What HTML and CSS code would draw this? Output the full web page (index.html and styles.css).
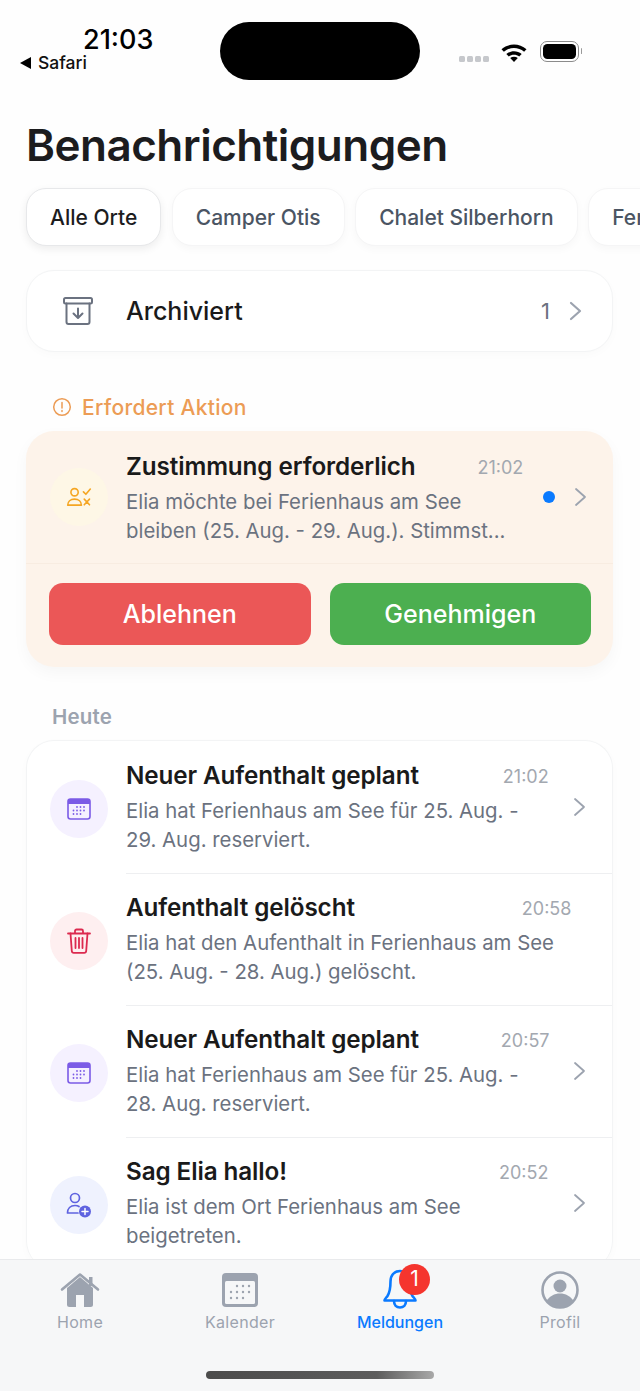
FILE: index.html
```html
<!DOCTYPE html>
<html lang="en">
<head>
    <meta charset="UTF-8">
    <meta name="viewport" content="width=device-width, initial-scale=1.0">
    <title>Benachrichtigungen</title>
    <link rel="stylesheet" href="styles.css">
</head>
<body>
    <div class="phone">
        <div class="status-bar">
            <div class="status-left">
                <div class="clock">21:03</div>
                <div class="back-app"><span class="back-arrow"></span>Safari</div>
            </div>
            <div class="island"></div>
            <div class="status-right">
                <div class="signal"><span></span><span></span><span></span><span></span></div>
                <svg class="wifi" width="28" height="20" viewBox="0 0 28 20">
                    <path d="M1.5 7.2C8.6.9 19.4.9 26.5 7.2l-2.4 2.6C18.300 4.800 9.700 4.800 3.900 9.800z" fill="#000"/>
                    <path d="M6.300 12C10.800 8.200 17.200 8.200 21.700 12l-2.500 2.600c-3-2.500-7.400-2.500-10.400 0z" fill="#000"/>
                    <path d="M10.200 16c2.200-1.700 5.400-1.700 7.600 0L14 20z" fill="#000"/>
                </svg>
                <div class="battery"><div class="battery-fill"></div></div>
            </div>
        </div>

        <h1>Benachrichtigungen</h1>

        <div class="chips">
            <div class="chip active">Alle Orte</div>
            <div class="chip">Camper Otis</div>
            <div class="chip">Chalet Silberhorn</div>
            <div class="chip">Ferienhaus am See</div>
        </div>

        <div class="archive-card">
            <svg class="archive-icon" width="32" height="30" viewBox="0 0 32 30" fill="none" stroke="#6b7280" stroke-width="2" stroke-linecap="round" stroke-linejoin="round">
                <rect x="2" y="2" width="28" height="5.500" rx="1.500"/>
                <path d="M4.500 7.500V26a2 2 0 0 0 2 2h19a2 2 0 0 0 2-2V7.500"/>
                <path d="M16 12.500v9M11.500 17.500l4.500 4.500 4.500-4.500"/>
            </svg>
            <div class="archive-label">Archiviert</div>
            <div class="archive-count">1</div>
            <svg class="chevron" width="14" height="20" viewBox="0 0 14 20"><path d="M2 2l9 8-9 8" fill="none" stroke="#9ca3af" stroke-width="2.200" stroke-linecap="round" stroke-linejoin="round"/></svg>
        </div>

        <div class="section-action">
            <svg width="20" height="20" viewBox="0 0 20 20" fill="none" stroke="#ec9c55" stroke-width="1.500"><circle cx="10" cy="10" r="8.300"/><path d="M10 5.500v5.500M10 13.500v1" stroke-linecap="round"/></svg>
            <span>Erfordert Aktion</span>
        </div>

        <div class="action-card">
            <div class="row action-row">
                <div class="icon-circle yellow">
                    <svg width="26" height="21" viewBox="0 0 32 26" fill="none" stroke="#f5a623" stroke-width="2" stroke-linecap="round" stroke-linejoin="round">
                        <circle cx="10.500" cy="6.500" r="4.500"/>
                        <path d="M2 22.500c0-4.500 3.500-7.500 8.500-7.500s8.500 3 8.500 7.500z"/>
                        <path d="M21.500 6l3 3 5.500-6.500M22.500 15l6.500 7M29 15l-6.500 7"/>
                    </svg>
                </div>
                <div class="row-body">
                    <div class="row-head">
                        <div class="row-title">Zustimmung erforderlich</div>
                        <div class="row-time action-time">21:02</div>
                    </div>
                    <div class="row-text">Elia möchte bei Ferienhaus am See<br>bleiben (25. Aug. - 29. Aug.). Stimmst...</div>
                </div>
                <div class="unread-dot"></div>
                <svg class="chevron row-chevron" width="14" height="20" viewBox="0 0 14 20"><path d="M2 2l9 8-9 8" fill="none" stroke="#9ca3af" stroke-width="1.800" stroke-linecap="round" stroke-linejoin="round"/></svg>
            </div>
            <div class="action-buttons">
                <button class="btn-decline">Ablehnen</button>
                <button class="btn-approve">Genehmigen</button>
            </div>
        </div>

        <div class="section-today">Heute</div>

        <div class="list-card">
            <div class="row">
                <div class="icon-circle purple">
                    <svg width="24" height="22" viewBox="0 0 24 22">
                        <rect x="1" y="1" width="22" height="20" rx="2.500" fill="#f5f0ff" stroke="#7b5be6" stroke-width="1.600"/>
                        <path d="M1 6V3.500A2.500 2.500 0 0 1 3.500 1h17A2.500 2.500 0 0 1 23 3.500V6z" fill="#7b5be6"/>
                        <g fill="#7b5be6"><circle cx="10" cy="9" r=".9"/><circle cx="13.500" cy="9" r=".9"/><circle cx="17" cy="9" r=".9"/><circle cx="6.500" cy="12.500" r=".9"/><circle cx="10" cy="12.500" r=".9"/><circle cx="13.500" cy="12.500" r=".9"/><circle cx="17" cy="12.500" r=".9"/><circle cx="6.500" cy="16" r=".9"/><circle cx="10" cy="16" r=".9"/><circle cx="13.500" cy="16" r=".9"/></g>
                    </svg>
                </div>
                <div class="row-body">
                    <div class="row-head">
                        <div class="row-title">Neuer Aufenthalt geplant</div>
                        <div class="row-time time-1">21:02</div>
                    </div>
                    <div class="row-text">Elia hat Ferienhaus am See für 25. Aug. -<br>29. Aug. reserviert.</div>
                </div>
                <svg class="chevron row-chevron" width="14" height="20" viewBox="0 0 14 20"><path d="M2 2l9 8-9 8" fill="none" stroke="#9ca3af" stroke-width="1.800" stroke-linecap="round" stroke-linejoin="round"/></svg>
            </div>
            <div class="row">
                <div class="icon-circle red">
                    <svg width="24" height="26" viewBox="0 0 24 26" fill="none" stroke="#dc2a4f" stroke-width="1.800" stroke-linecap="round" stroke-linejoin="round">
                        <path d="M1 5.500h22M8 5.500V3a1.500 1.500 0 0 1 1.500-1.500h5A1.500 1.500 0 0 1 16 3v2.500"/>
                        <path d="M3.500 5.500l1.300 17.500a2 2 0 0 0 2 1.800h10.400a2 2 0 0 0 2-1.800l1.300-17.500"/>
                        <path d="M8.500 10v10M12 10v10M15.500 10v10"/>
                    </svg>
                </div>
                <div class="row-body">
                    <div class="row-head">
                        <div class="row-title">Aufenthalt gelöscht</div>
                        <div class="row-time time-2">20:58</div>
                    </div>
                    <div class="row-text">Elia hat den Aufenthalt in Ferienhaus am See<br>(25. Aug. - 28. Aug.) gelöscht.</div>
                </div>
            </div>
            <div class="row">
                <div class="icon-circle purple">
                    <svg width="24" height="22" viewBox="0 0 24 22">
                        <rect x="1" y="1" width="22" height="20" rx="2.500" fill="#f5f0ff" stroke="#7b5be6" stroke-width="1.600"/>
                        <path d="M1 6V3.500A2.500 2.500 0 0 1 3.500 1h17A2.500 2.500 0 0 1 23 3.500V6z" fill="#7b5be6"/>
                        <g fill="#7b5be6"><circle cx="10" cy="9" r=".9"/><circle cx="13.500" cy="9" r=".9"/><circle cx="17" cy="9" r=".9"/><circle cx="6.500" cy="12.500" r=".9"/><circle cx="10" cy="12.500" r=".9"/><circle cx="13.500" cy="12.500" r=".9"/><circle cx="17" cy="12.500" r=".9"/><circle cx="6.500" cy="16" r=".9"/><circle cx="10" cy="16" r=".9"/><circle cx="13.500" cy="16" r=".9"/></g>
                    </svg>
                </div>
                <div class="row-body">
                    <div class="row-head">
                        <div class="row-title">Neuer Aufenthalt geplant</div>
                        <div class="row-time time-3">20:57</div>
                    </div>
                    <div class="row-text">Elia hat Ferienhaus am See für 25. Aug. -<br>28. Aug. reserviert.</div>
                </div>
                <svg class="chevron row-chevron" width="14" height="20" viewBox="0 0 14 20"><path d="M2 2l9 8-9 8" fill="none" stroke="#9ca3af" stroke-width="1.800" stroke-linecap="round" stroke-linejoin="round"/></svg>
            </div>
            <div class="row">
                <div class="icon-circle blue">
                    <svg width="26" height="26" viewBox="0 0 26 26" fill="none" stroke="#5f63e0" stroke-width="1.700" stroke-linecap="round">
                        <circle cx="9" cy="6" r="4.500"/>
                        <path d="M1.500 21c0-4.500 3-7.500 7.500-7.500 1.500 0 3 .3 4 1M1.500 21H12"/>
                        <circle cx="19" cy="19.500" r="6" fill="#5f63e0" stroke="none"/>
                        <path d="M19 16.500v6M16 19.500h6" stroke="#fff" stroke-width="1.500"/>
                    </svg>
                </div>
                <div class="row-body">
                    <div class="row-head">
                        <div class="row-title">Sag Elia hallo!</div>
                        <div class="row-time time-4">20:52</div>
                    </div>
                    <div class="row-text">Elia ist dem Ort Ferienhaus am See<br>beigetreten.</div>
                </div>
                <svg class="chevron row-chevron" width="14" height="20" viewBox="0 0 14 20"><path d="M2 2l9 8-9 8" fill="none" stroke="#9ca3af" stroke-width="1.800" stroke-linecap="round" stroke-linejoin="round"/></svg>
            </div>
        </div>

        <div class="tab-bar">
            <div class="tabs">
                <div class="tab tab-home">
                    <svg width="40" height="36" viewBox="0 0 40 36">
                        <path d="M7 16L20 5l13 11v16.500a2.500 2.500 0 0 1-2.500 2.500h-21A2.500 2.500 0 0 1 7 32.500z" fill="#9ca3af"/>
                        <rect x="16" y="23" width="8" height="12" fill="#f6f7f8"/>
                        <rect x="29" y="5" width="3.500" height="9" fill="#9ca3af"/>
                        <path d="M2 17.500L20 2.500l18 15" fill="none" stroke="#9ca3af" stroke-width="2.600" stroke-linecap="round" stroke-linejoin="round"/>
                    </svg>
                    <span>Home</span>
                </div>
                <div class="tab tab-calendar">
                    <svg width="36" height="34" viewBox="0 0 36 34">
                        <rect x="0" y="0" width="36" height="34" rx="4" fill="#9ca3af"/>
                        <rect x="3" y="8" width="30" height="23" rx="1.500" fill="#f6f7f8"/>
                        <g fill="#9ca3af"><circle cx="15" cy="13" r="1.200"/><circle cx="21" cy="13" r="1.200"/><circle cx="27" cy="13" r="1.200"/><circle cx="9" cy="19" r="1.200"/><circle cx="15" cy="19" r="1.200"/><circle cx="21" cy="19" r="1.200"/><circle cx="27" cy="19" r="1.200"/><circle cx="9" cy="25" r="1.200"/><circle cx="15" cy="25" r="1.200"/><circle cx="21" cy="25" r="1.200"/></g>
                    </svg>
                    <span>Kalender</span>
                </div>
                <div class="tab tab-bell active">
                    <div class="bell-wrap">
                        <svg width="36" height="42" viewBox="0 0 36 42" fill="none" stroke="#0a7aff" stroke-width="2.600" stroke-linecap="round" stroke-linejoin="round">
                            <path d="M18 3c-6 0-9.500 4.500-9.500 10.500 0 7-1.500 12-3 14.500-1 1.500-3 3-3 4.500h31c0-1.500-2-3-3-4.500-1.500-2.500-3-7.500-3-14.500C27.500 7.500 24 3 18 3z"/>
                            <path d="M12 33c0 4 2.500 6.500 6 6.500s6-2.500 6-6.500"/>
                        </svg>
                        <div class="badge">1</div>
                    </div>
                    <span>Meldungen</span>
                </div>
                <div class="tab tab-profile">
                    <svg width="38" height="38" viewBox="0 0 38 38">
                        <circle cx="19" cy="19" r="17.500" fill="#f6f7f8" stroke="#9ca3af" stroke-width="2.600"/>
                        <circle cx="19" cy="15" r="6.500" fill="#9ca3af"/>
                        <path d="M5.500 30c3-5 8-7.500 13.500-7.500S29.500 25 32.500 30A17.500 17.500 0 0 1 19 36.500 17.500 17.500 0 0 1 5.500 30z" fill="#9ca3af"/>
                    </svg>
                    <span>Profil</span>
                </div>
            </div>
            <div class="home-indicator"></div>
        </div>
    </div>
</body>
</html>
```

FILE: styles.css
```css
html, body {
    margin: 0;
    padding: 0;
}

body {
    font-family: Inter, "Liberation Sans", sans-serif;
    background-color: #fff;
    color: #1a1a1a;
}

.phone {
    position: relative;
    width: 640px;
    height: 1391px;
    overflow: hidden;
    background-color: #fefefe;
}

/* status bar */
.status-bar {
    display: flex;
    height: 100px;
    box-sizing: border-box;
    padding: 22px 0 0 20px;
}

.status-left {
    width: 200px;
}

.clock {
    margin-left: 63px;
    font-size: 27px;
    font-weight: 500;
    line-height: 36px;
    color: #000;
}

.back-app {
    display: flex;
    align-items: center;
    font-size: 17.500px;
    font-weight: 500;
    line-height: 20px;
    margin-top: -5px;
    color: #111;
}

.back-arrow {
    width: 0;
    height: 0;
    border-style: solid;
    border-width: 6px 11px 6px 0;
    border-color: transparent #000 transparent transparent;
    margin-right: 7px;
}

.island {
    width: 200px;
    height: 58px;
    border-radius: 29px;
    background-color: #000;
}

.status-right {
    display: flex;
    align-items: flex-start;
    padding: 19px 0 0 39px;
}

.signal {
    display: flex;
    gap: 2.500px;
    margin: 15px 11px 0 0;
}

.signal span {
    width: 5.500px;
    height: 5.500px;
    border-radius: 1.500px;
    background-color: #c6c8cc;
}

.wifi {
    margin: 1px 12px 0 0;
}

.battery {
    box-sizing: border-box;
    position: relative;
    width: 39px;
    height: 21px;
    border: 1.500px solid #8b8b8b;
    border-radius: 7px;
    padding: 2px;
}

.battery::after {
    content: "";
    position: absolute;
    right: -4.500px;
    top: 6px;
    width: 1.500px;
    height: 6px;
    border-radius: 1px;
    background-color: #9a9a9a;
}

.battery-fill {
    height: 100%;
    border-radius: 4.500px;
    background-color: #000;
}

/* title and location chips */
h1 {
    margin: 18px 0 0 26px;
    font-size: 44px;
    font-weight: 600;
    line-height: 54px;
    letter-spacing: -0.5px;
    color: #1c1c1e;
}

.chips {
    display: flex;
    gap: 10.500px;
    margin: 16px 0 0 26px;
    width: 700px;
}

.chip {
    box-sizing: border-box;
    height: 58px;
    line-height: 57px;
    padding: 0 23px;
    font-size: 21px;
    font-weight: 500;
    color: #4b5563;
    white-space: nowrap;
    background-color: #fff;
    border: 1px solid #f5f5f6;
    border-radius: 20px;
    box-shadow: 0 3px 8px rgba(0, 0, 0, 0.03);
}

.chip.active {
    color: #1c1c1e;
    border-color: #e7e8ea;
    box-shadow: 0 3px 8px rgba(0, 0, 0, 0.07);
}

/* archived */
.archive-card {
    box-sizing: border-box;
    display: flex;
    align-items: center;
    width: 587px;
    height: 82px;
    margin: 24px 0 0 26px;
    padding: 0 29px 0 30px;
    background-color: #fff;
    border: 1px solid #f3f4f5;
    border-radius: 28px;
    box-shadow: 0 3px 10px rgba(0, 0, 0, 0.02);
}

.archive-icon {
    margin: 0 32px 0 5px;
}

.archive-label {
    flex: 1;
    font-size: 25px;
    font-weight: 500;
}

.archive-count {
    margin-right: 19px;
    font-size: 22px;
    color: #6b7280;
}

.chevron {
    display: block;
    flex: none;
}

/* action section */
.section-action {
    display: flex;
    align-items: center;
    gap: 10px;
    margin: 43px 0 0 52px;
    height: 24px;
    font-size: 21px;
    font-weight: 500;
    letter-spacing: 0.3px;
    color: #ec9c55;
}

.action-card {
    width: 587px;
    margin: 12px 0 0 26px;
    background-color: #fdf3ea;
    border-radius: 28px;
    box-shadow: 0 6px 16px rgba(0, 0, 0, 0.035);
}

.row {
    box-sizing: border-box;
    display: flex;
    align-items: center;
    height: 132px;
    padding-left: 23px;
    position: relative;
}

.action-row {
    height: 133px;
    padding-left: 24px;
    border-bottom: 1px solid #f8ece1;
}

.icon-circle {
    flex: none;
    display: flex;
    align-items: center;
    justify-content: center;
    width: 58px;
    height: 58px;
    border-radius: 50%;
    margin: 3px 18px 0 0;
}

.action-row .icon-circle {
    margin-top: 0;
}

.icon-circle.yellow {
    background-color: #fef7e6;
}

.icon-circle.purple {
    background-color: #f5f1ff;
}

.icon-circle.red {
    background-color: #feeff0;
}

.icon-circle.blue {
    background-color: #eff2fe;
}

.row-body {
    align-self: stretch;
    flex: 1;
    padding-top: 18px;
    min-width: 0;
}

.action-row .row-body {
    padding-top: 19px;
}

.row-head {
    display: flex;
    align-items: center;
    height: 32px;
}

.row-title {
    font-size: 24.250px;
    font-weight: 600;
    letter-spacing: -0.1px;
    color: #1a1a1a;
    white-space: nowrap;
}

.row-time {
    font-size: 18px;
    color: #a3a8b0;
    margin-top: 3px;
}

.action-time {
    margin-left: 62px;
}

.time-1 {
    margin-left: 84px;
}

.time-2 {
    margin-left: 167px;
}

.time-3 {
    margin-left: 82px;
}

.time-4 {
    margin-left: 212px;
}

.row-text {
    margin-top: 6px;
    font-size: 20.350px;
    line-height: 28.500px;
    color: #6b7280;
    white-space: nowrap;
}

.unread-dot {
    flex: none;
    width: 12px;
    height: 12px;
    border-radius: 50%;
    background-color: #0a7aff;
    margin-right: 19px;
}

.row-chevron {
    margin-right: 25px;
}

.action-buttons {
    display: flex;
    gap: 19px;
    padding: 19px 22px 22px 23px;
}

.action-buttons button {
    flex: 1;
    height: 62px;
    border: none;
    border-radius: 14px;
    font-family: inherit;
    font-size: 25px;
    font-weight: 500;
    color: #fff;
    cursor: pointer;
}

.btn-decline {
    background-color: #eb5757;
}

.btn-approve {
    background-color: #4caf50;
}

/* today list */
.section-today {
    margin: 38px 0 0 52px;
    height: 24px;
    line-height: 24px;
    font-size: 20.500px;
    font-weight: 600;
    letter-spacing: 0.2px;
    color: #9ca3af;
}

.list-card {
    width: 587px;
    margin: 11px 0 0 26px;
    background-color: #fff;
    border: 1px solid #f3f4f5;
    border-bottom: none;
    box-sizing: border-box;
    border-radius: 28px;
    box-shadow: 0 3px 10px rgba(0, 0, 0, 0.02);
}

.list-card .row + .row::before {
    content: "";
    position: absolute;
    left: 99px;
    right: 0;
    top: 0;
    height: 1px;
    background-color: #eeeff1;
}

/* tab bar */
.tab-bar {
    position: absolute;
    left: 0;
    right: 0;
    bottom: 0;
    height: 132px;
    box-sizing: border-box;
    background-color: #f6f7f8;
    border-top: 1px solid #e9eaec;
}

.tabs {
    display: grid;
    grid-template-columns: repeat(4, 160px);
    height: 72px;
}

.tab {
    display: flex;
    flex-direction: column;
    align-items: center;
    justify-content: flex-end;
    font-size: 16px;
    font-weight: 400;
    letter-spacing: 0.3px;
    line-height: 20px;
    color: #9ca3af;
}

.tab svg {
    display: block;
}

.tab-home svg {
    margin-bottom: 4px;
}

.tab-calendar svg {
    margin-bottom: 5px;
}

.tab-bell svg {
    margin-bottom: 2px;
}

.tab-profile svg {
    margin-bottom: 3px;
}

.tab.active {
    color: #0a7aff;
    font-weight: 500;
    letter-spacing: 0;
}

.bell-wrap {
    position: relative;
}

.badge {
    position: absolute;
    left: 17px;
    top: -4px;
    width: 31px;
    height: 31px;
    border-radius: 50%;
    background-color: #f5352e;
    color: #fff;
    font-size: 21px;
    font-weight: 400;
    line-height: 30px;
    text-align: center;
}

.home-indicator {
    width: 228px;
    height: 8px;
    margin: 39px auto 0;
    border-radius: 4px;
    background: linear-gradient(to right, #4c4c4c, #5d5d5d 75%, #a8a8a8);
}
```
